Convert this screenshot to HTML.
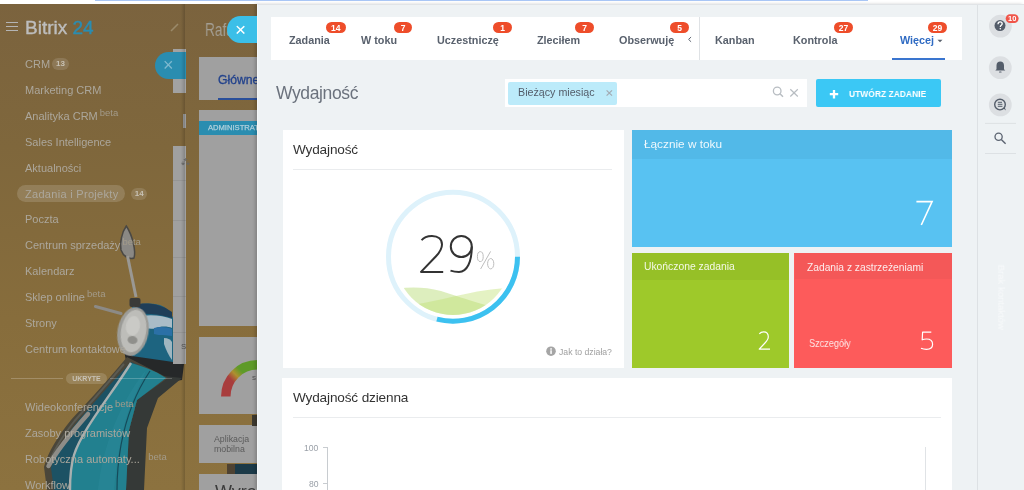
<!DOCTYPE html>
<html><head><meta charset="utf-8">
<style>
*{box-sizing:border-box;margin:0;padding:0}
html,body{width:1024px;height:490px;overflow:hidden}
body *{will-change:transform}
body{position:relative;background:#80683d;font-family:"Liberation Sans",sans-serif}
.a{position:absolute}
.t{position:absolute;white-space:nowrap;line-height:1}
.menu .t{color:#aca79c;font-size:11px}
.beta{font-size:9.5px;color:#a39b8a;position:relative;top:-3.8px;margin-left:2px}
.badge{position:absolute;background:#ee4d2a;color:#fff;font-weight:bold;font-size:8.5px;height:11.2px;border-radius:6px;text-align:center;line-height:13px}
.tab{position:absolute;top:35px;color:#59616d;font-weight:bold;font-size:10.8px;line-height:1;white-space:nowrap}
.card{position:absolute;background:#fff}
.num{position:absolute;color:#fff;font-size:34px;line-height:1}
</style></head><body>

<!-- wallpaper & scooter -->
<svg class="a" style="left:0;top:0" width="257" height="490" viewBox="0 0 257 490">
  <defs><linearGradient id="wp" x1="0" y1="0" x2="0" y2="1"><stop offset="0" stop-color="#7b633e"/><stop offset=".3" stop-color="#7f673c"/><stop offset=".65" stop-color="#876d3c"/><stop offset="1" stop-color="#8c723f"/></linearGradient></defs>
  <rect x="0" y="0" width="257" height="490" fill="url(#wp)"/>
  <!-- mirror -->
  <path d="M126.3 226 C 122 232, 119.5 243, 121 250 C 123 256, 129 260, 134 258 C 136 252, 133 236, 126.3 226 Z" fill="#8a8884" stroke="#4a4844" stroke-width="1.5"/>
  <line x1="127.5" y1="256" x2="136" y2="297" stroke="#9a9894" stroke-width="3"/>
  <!-- handlebar -->
  <line x1="95.5" y1="306.5" x2="121" y2="313.5" stroke="#8c8a86" stroke-width="3" stroke-linecap="round"/>
  <!-- black shadow -->
  <path d="M124 350 L172 350 L184 364 L182 380 L168 382 L148 376 L128 372 Z" fill="#262829"/>
  <!-- blue body -->
  <path d="M132 306 C 140 303, 150 303, 160 305 C 166 307, 171 312, 173 318 L173 362 C 160 360, 145 358, 132 356 Z" fill="#1d6480"/>
  <path d="M134 305 C 145 302, 160 303, 172 312 L172 318 C 160 314, 148 313, 136 314 Z" fill="#1f3e58"/>
  <path d="M142 316 C 152 314, 164 316, 172 319 L172 328 C 168 326, 160 326, 156 328 C 150 330, 146 328, 142 326 Z" fill="#a9bcc7"/>
  <path d="M154 328 C 160 326, 168 327, 172 329 L172 336 C 166 335, 160 336, 154 334 Z" fill="#2b70a6"/>
  <path d="M164 338 C 168 338, 171 340, 172 342 L172 360 C 169 356, 166 350, 164 344 Z" fill="#9fb6c0"/>
  <!-- collar -->
  <rect x="129.5" y="298" width="11" height="9" rx="2" fill="#3a3a38"/>
  <!-- headlight -->
  <g transform="rotate(10 133 331.5)">
    <ellipse cx="133" cy="331.5" rx="15.5" ry="24.5" fill="#9c9c98"/>
    <ellipse cx="133.5" cy="331" rx="12.5" ry="21.5" fill="#bdbdb9"/>
    <ellipse cx="132" cy="326" rx="7" ry="10" fill="#cacac6"/>
    <ellipse cx="134" cy="340" rx="5" ry="4" fill="#8f8f8b"/>
  </g>
  <!-- dark side strip -->
  <path d="M164 376 L182 378 L158 398 L147 428 L144 490 L124 490 L129 430 L137 400 Z" fill="#353937"/>
  <!-- leg shield -->
  <path d="M127 357 L168 378 L137 400 L129 430 L126 490 L47 490 L44 467 C 48 452, 58 436, 71 420 C 85 405, 110 378, 127 357 Z" fill="#4a463a"/>
  <path d="M131 362 L166 378 L137 400 L129 430 L126 490 L54 490 L51 468 C 55 453, 65 437, 78 421 C 91 406, 113 381, 131 362 Z" fill="#1c5264"/>
  <path d="M124 364 C 107 384, 87 407, 74.5 421 C 62 437, 52 452, 48 466" fill="none" stroke="#5a5a52" stroke-width="2"/>
  <path d="M88 414 C 72 432, 56 452, 48.5 466" fill="none" stroke="#8e8d88" stroke-width="4.5" stroke-linecap="round"/>
  <path d="M131 363 C 150 368, 160 374, 166 378 L137 400 L129 430 L126 490 L70 490 C 70 478, 71 465, 74 455 C 82 430, 110 397, 131 363 Z" fill="#22808f"/>
  <path d="M146 370 C 140 385, 132 400, 126 418 C 120 440, 116 465, 114 490 L98 490 C 102 450, 118 405, 146 370 Z" fill="#2a8898" opacity=".6"/>
  <path d="M150 371 C 136 392, 126 418, 121 445 C 118 462, 117 478, 117 490" fill="none" stroke="#164a5a" stroke-width="1.2"/>
  <path d="M131 363 C 111 395, 82 430, 74 455 C 71 465, 70 478, 70 490" fill="none" stroke="#a8b0b0" stroke-width="2.4"/>
</svg>

<!-- top strip -->
<div class="a" style="left:0;top:0;width:1024px;height:4px;background:#fff"></div>
<div class="a" style="left:95px;top:0;width:773px;height:1px;background:#a9c6f5"></div>

<!-- sidebar -->
<div class="menu">
  <div class="a" style="left:6px;top:22px;width:11.5px;height:1.3px;background:#b4b4b4"></div>
  <div class="a" style="left:6px;top:25.8px;width:11.5px;height:1.3px;background:#b4b4b4"></div>
  <div class="a" style="left:6px;top:29.6px;width:11.5px;height:1.3px;background:#b4b4b4"></div>
  <div class="t" style="left:25px;top:18px;font-size:19px;color:#bdbdbd;-webkit-text-stroke:.4px #bdbdbd">Bitrix <span style="color:#2a8db2;-webkit-text-stroke:.4px #2a8db2">24</span></div>
  <div class="t" style="left:24.5px;top:59px">CRM</div>
  <div class="a" style="left:52.4px;top:58.3px;width:17px;height:12px;border-radius:6px;background:rgba(255,255,255,.13);color:#c8c2b5;font-size:8px;font-weight:bold;text-align:center;line-height:12px">13</div>
  <div class="t" style="left:24.5px;top:85px">Marketing CRM</div>
  <div class="t" style="left:24.5px;top:111px">Analityka CRM<span class="beta">beta</span></div>
  <div class="t" style="left:24.5px;top:137px">Sales Intelligence</div>
  <div class="t" style="left:24.5px;top:163px">Aktualności</div>
  <div class="a" style="left:17px;top:184.7px;width:108.4px;height:17.1px;border-radius:9px;background:rgba(255,255,255,.15)"></div>
  <div class="t" style="left:24.5px;top:189px;letter-spacing:.3px">Zadania i Projekty</div>
  <div class="a" style="left:130.6px;top:188.4px;width:16.4px;height:11.8px;border-radius:6px;background:rgba(255,255,255,.13);color:#c8c2b5;font-size:8px;font-weight:bold;text-align:center;line-height:12px">14</div>
  <div class="t" style="left:24.5px;top:214px">Poczta</div>
  <div class="t" style="left:24.5px;top:240px">Centrum sprzedaży<span class="beta">beta</span></div>
  <div class="t" style="left:24.5px;top:266px">Kalendarz</div>
  <div class="t" style="left:24.5px;top:292px">Sklep online<span class="beta">beta</span></div>
  <div class="t" style="left:24.5px;top:318px">Strony</div>
  <div class="t" style="left:24.5px;top:344px">Centrum kontaktowe</div>
  <div class="a" style="left:11px;top:378px;width:52px;height:1px;background:rgba(255,255,255,.22)"></div>
  <div class="a" style="left:66px;top:373px;width:41px;height:11px;border-radius:6px;background:rgba(255,255,255,.15);color:#c8c2b5;font-size:7px;font-weight:bold;text-align:center;line-height:11px">UKRYTE</div>
  <div class="a" style="left:110px;top:378px;width:62px;height:1px;background:rgba(255,255,255,.22)"></div>
  <div class="t" style="left:24.5px;top:402.4px">Wideokonferencje<span class="beta">beta</span></div>
  <div class="t" style="left:24.5px;top:428px">Zasoby programistów</div>
  <div class="t" style="left:24.5px;top:454px">Robotyczna automaty...<span class="beta" style="margin-left:8.5px;top:-3px">beta</span></div>
  <div class="t" style="left:24.5px;top:479.8px">Workflow</div>
</div>

<!-- layer A -->
<div class="a" style="left:172.8px;top:49px;width:13px;height:44px;background:#a2a2a2"></div>
<div class="a" style="left:183px;top:114px;width:3px;height:14px;background:#9a9a9a"></div>
<div class="a" style="left:172.8px;top:146px;width:13px;height:218px;background:#a0a0a0"></div>
<div class="a" style="left:172.8px;top:180px;width:13px;height:1px;background:#959595"></div>
<div class="a" style="left:172.8px;top:219.5px;width:13px;height:1px;background:#959595"></div>
<div class="a" style="left:172.8px;top:256.5px;width:13px;height:1px;background:#959595"></div>
<div class="a" style="left:172.8px;top:296px;width:13px;height:1px;background:#959595"></div>
<div class="a" style="left:172.8px;top:332px;width:13px;height:1px;background:#959595"></div>
<div class="t" style="left:181px;top:343px;font-size:8px;color:#555">S</div>
<div class="t" style="left:181px;top:158px;font-size:8px;color:#666">⁂</div>
<div class="a" style="left:154.6px;top:52px;width:31px;height:27px;border-radius:13.5px 0 0 13.5px;background:#2a8db0"></div>
<div class="t" style="left:163px;top:56px;font-size:18px;color:#7fb9cf">×</div>
<svg class="a" style="left:168px;top:20px" width="14" height="14" viewBox="0 0 14 14"><line x1="3" y1="11" x2="10" y2="4" stroke="#9a8a6a" stroke-width="1.6"/></svg>

<!-- layer B -->
<div class="a" style="left:181px;top:4px;width:4px;height:486px;background:linear-gradient(to right,rgba(0,0,0,0),rgba(0,0,0,.16))"></div>
<div class="t" style="left:205px;top:20.6px;font-size:18px;color:#a39e93;transform:scaleX(.76);transform-origin:0 0">Rafał</div>
<div class="a" style="left:199px;top:57px;width:58px;height:43px;background:#a0a0a0"></div>
<div class="t" style="left:217.6px;top:74.4px;font-size:12.2px;color:#22428c;-webkit-text-stroke:.3px #22428c">Główne</div>
<div class="a" style="left:217.8px;top:98.2px;width:40px;height:1.8px;background:#2a4f9a"></div>
<div class="a" style="left:199px;top:110px;width:58px;height:216px;background:#a0a0a0"></div>
<div class="a" style="left:199px;top:121px;width:58px;height:14px;background:#2a8db0"></div>
<div class="t" style="left:208px;top:124.2px;font-size:7.6px;color:#b0d0dc;-webkit-text-stroke:.25px #b0d0dc">ADMINISTRATOR</div>
<div class="a" style="left:199px;top:337.3px;width:58px;height:77.4px;background:#a0a0a0"></div>
<svg class="a" style="left:199px;top:337px" width="58" height="78" viewBox="199 337 58 78">
  <defs><linearGradient id="gg" x1="0" y1="1" x2="1" y2="0"><stop offset="0" stop-color="#a83d3d"/><stop offset=".35" stop-color="#a83d3d"/><stop offset=".5" stop-color="#ad9030"/><stop offset=".65" stop-color="#5e9a28"/><stop offset="1" stop-color="#5e9a28"/></linearGradient></defs>
  <path d="M225.8 396.5 A 31.7 31.7 0 0 1 257.5 364.8" fill="none" stroke="url(#gg)" stroke-width="9.5"/>
  <text x="252" y="380" font-family="Liberation Sans" font-size="8" fill="#555">s</text>
</svg>
<div class="a" style="left:199px;top:425.3px;width:58px;height:38.2px;background:#a0a0a0"></div>
<div class="t" style="left:214px;top:434px;font-size:8.8px;color:#5b5b5b;line-height:10.4px">Aplikacja<br>mobilna</div>
<div class="a" style="left:227px;top:463.5px;width:8px;height:10.3px;background:#4e4232"></div>
<div class="a" style="left:235px;top:463.5px;width:22px;height:10.3px;background:#1c3a48"></div>
<div class="a" style="left:252px;top:414.7px;width:5px;height:10.6px;background:#3e3a30"></div>
<div class="a" style="left:199px;top:474px;width:58px;height:16px;background:#a0a0a0"></div>
<div class="t" style="left:215px;top:483.2px;font-size:18px;color:#3c3c3c">Wyrazy</div>

<!-- front panel -->
<div class="a" style="left:257px;top:4px;width:767px;height:486px;background:#eef2f4;border-top:1px solid #e1e4e7;border-left:1px solid #f6f8f9;box-shadow:-2px 0 3px rgba(0,0,0,.18)"></div>

<!-- front close -->
<div class="a" style="left:227px;top:16px;width:30px;height:27px;border-radius:13.5px 0 0 13.5px;background:#3bbfe8"></div>
<div class="t" style="left:235px;top:20px;font-size:19px;color:#fff">×</div>

<!-- tab bar -->
<div class="card" style="left:271px;top:17px;width:691px;height:43px"></div>
<div class="tab" style="left:289.3px">Zadania</div>
<div class="badge" style="left:326px;top:22.3px;width:19.6px">14</div>
<div class="tab" style="left:361px">W toku</div>
<div class="badge" style="left:394px;top:22.3px;width:18px">7</div>
<div class="tab" style="left:436.8px">Uczestniczę</div>
<div class="badge" style="left:493px;top:22.3px;width:19px">1</div>
<div class="tab" style="left:536.6px">Zleciłem</div>
<div class="badge" style="left:575px;top:22.3px;width:19px">7</div>
<div class="tab" style="left:618.7px">Obserwuję</div>
<div class="badge" style="left:670px;top:22.3px;width:19px">5</div>
<svg class="a" style="left:687px;top:36px" width="6" height="8" viewBox="0 0 6 8"><path d="M4.1 1 L1.6 3.4 L4.1 5.8" fill="none" stroke="#5d6571" stroke-width="1"/></svg>
<div class="a" style="left:699px;top:17px;width:1px;height:43px;background:#dfe2e5"></div>
<div class="tab" style="left:715.2px">Kanban</div>
<div class="tab" style="left:793.4px">Kontrola</div>
<div class="badge" style="left:833.6px;top:22.3px;width:19px">27</div>
<div class="tab" style="left:899.7px;color:#2f6bc3">Więcej</div>
<svg class="a" style="left:937px;top:39px" width="6" height="4" viewBox="0 0 6 4"><path d="M0.5 0.8 L5.5 0.8 L3 3.2 Z" fill="#59616d"/></svg>
<div class="badge" style="left:928px;top:22.3px;width:19px">29</div>
<div class="a" style="left:892px;top:58px;width:53px;height:2px;background:#3a75cf"></div>

<!-- title -->
<div class="t" style="left:276px;top:85px;font-size:17.5px;letter-spacing:-0.38px;color:#6b727d">Wydajność</div>

<!-- search -->
<div class="card" style="left:505px;top:79.3px;width:302px;height:27.7px"></div>
<div class="a" style="left:508px;top:81.5px;width:109px;height:22.5px;background:#bcebfa;border-radius:2px"></div>
<div class="t" style="left:518px;top:87.2px;font-size:10.7px;color:#535c69">Bieżący miesiąc</div>
<svg class="a" style="left:605px;top:88px" width="9" height="10" viewBox="0 0 9 10"><path d="M1.6 2.3 L7 7.7 M7 2.3 L1.6 7.7" stroke="#a3aab2" stroke-width="1.2"/></svg>
<svg class="a" style="left:772px;top:86px" width="28" height="13" viewBox="0 0 28 13">
  <circle cx="5.2" cy="5" r="3.8" fill="none" stroke="#b8bdc2" stroke-width="1.3"/>
  <line x1="8" y1="7.8" x2="11" y2="10.8" stroke="#b8bdc2" stroke-width="1.5"/>
  <line x1="18.3" y1="3.2" x2="25.8" y2="10.5" stroke="#b8bdc2" stroke-width="1.2"/>
  <line x1="25.8" y1="3.2" x2="18.3" y2="10.5" stroke="#b8bdc2" stroke-width="1.2"/>
</svg>
<div class="a" style="left:816px;top:79.3px;width:125px;height:27.7px;background:#3bc8f5;border-radius:2px"></div>
<svg class="a" style="left:829px;top:89px" width="10" height="10" viewBox="0 0 10 10"><path d="M5 1 V9.4 M0.8 5.2 H9.2" stroke="#fff" stroke-width="2.3"/></svg>
<div class="t" style="left:848.5px;top:89.2px;font-size:9.8px;font-weight:bold;color:#fff;transform:scaleX(.865);transform-origin:0 0">UTWÓRZ ZADANIE</div>

<!-- card gauge -->
<div class="card" style="left:282.5px;top:130px;width:340.5px;height:238px"></div>
<div class="t" style="left:293px;top:143.2px;font-size:13.6px;letter-spacing:-0.15px;color:#333">Wydajność</div>
<div class="a" style="left:293px;top:169px;width:319px;height:1px;background:#eaecee"></div>
<svg class="a" style="left:383px;top:187px" width="140" height="140" viewBox="0 0 140 140">
  <defs><clipPath id="cp"><circle cx="70" cy="69.7" r="58.3"/></clipPath></defs>
  <circle cx="70" cy="69.7" r="64.5" fill="none" stroke="#def2fb" stroke-width="5"/>
  <g clip-path="url(#cp)">
    <path d="M0 104 C 18 100, 38 98.5, 58 104 C 78 110, 100 119, 140 127 L140 140 L0 140 Z" fill="#b3da6e" fill-opacity=".45"/>
    <path d="M0 122 C 30 119, 55 113, 80 107.5 C 100 103, 115 101, 140 100 L140 140 L0 140 Z" fill="#bfe070" fill-opacity=".42"/>
  </g>
  <path d="M 134.5 69.7 A 64.5 64.5 0 0 1 53.96 132.17" fill="none" stroke="#3cc1f0" stroke-width="5"/>
</svg>

<svg class="a" style="left:546px;top:346px" width="10" height="10" viewBox="0 0 10 10"><circle cx="5" cy="5.2" r="4.8" fill="#a5a5a5"/><rect x="4.3" y="4.3" width="1.5" height="3.6" fill="#fff"/><circle cx="5.05" cy="2.9" r=".85" fill="#fff"/></svg>
<div class="t" style="left:559px;top:348px;font-size:8.67px;color:#a0a0a0">Jak to działa?</div>

<!-- blue -->
<div class="a" style="left:632px;top:130px;width:319.6px;height:117px;background:#58c2f2"></div>
<div class="a" style="left:632px;top:130px;width:319.6px;height:28.6px;background:#52b9e8"></div>
<div class="t" style="left:644.3px;top:139px;font-size:11.8px;color:#eef8fd">Łącznie w toku</div>


<!-- green -->
<div class="a" style="left:632px;top:253px;width:157px;height:115px;background:#9ec92a"></div>
<div class="a" style="left:632px;top:253px;width:157px;height:26.5px;background:#96c027"></div>
<div class="t" style="left:644.3px;top:262px;font-size:10.34px;color:#f4f9e6">Ukończone zadania</div>


<!-- red -->
<div class="a" style="left:794.3px;top:253px;width:157.5px;height:115.3px;background:#fd5b5b"></div>
<div class="a" style="left:794.5px;top:253px;width:157.3px;height:26px;background:#f45858"></div>
<div class="t" style="left:807.2px;top:262.5px;font-size:10.25px;color:#fdecec">Zadania z zastrzeżeniami</div>
<div class="t" style="left:809px;top:337.5px;font-size:11.3px;color:#fde6e6;transform:scaleX(.81);transform-origin:0 0">Szczegóły</div>


<!-- bottom card -->
<div class="card" style="left:282.3px;top:377.8px;width:669.5px;height:120px"></div>
<div class="t" style="left:293.3px;top:391.2px;font-size:13.6px;letter-spacing:-0.15px;color:#333">Wydajność dzienna</div>
<div class="a" style="left:293px;top:417px;width:648px;height:1px;background:#eaecee"></div>
<div class="t" style="left:303.8px;top:444px;font-size:8.6px;color:#9aa0a8">100</div>
<div class="t" style="left:308.7px;top:480px;font-size:8.6px;color:#9aa0a8">80</div>
<div class="a" style="left:322.5px;top:447px;width:4.5px;height:1px;background:#c8ccd0"></div>
<div class="a" style="left:322.5px;top:483px;width:4.5px;height:1px;background:#c8ccd0"></div>
<div class="a" style="left:326.6px;top:447px;width:1px;height:50px;background:#c8ccd0"></div>
<div class="a" style="left:925.3px;top:447px;width:1px;height:50px;background:#e0e3e6"></div>

<!-- right bar -->
<div class="a" style="left:977px;top:5px;width:1px;height:485px;background:#dde1e4"></div>
<svg class="a" style="left:977px;top:0" width="47" height="490" viewBox="977 0 47 490">
  <circle cx="1000.4" cy="26.1" r="11.4" fill="#dcdfe2"/>
  <circle cx="1000" cy="25.6" r="5.5" fill="#535c69"/>
  <path d="M998 24.2 C 998 22.6, 999 21.9, 1000.1 21.9 C 1001.3 21.9, 1002.2 22.7, 1002.2 23.8 C 1002.2 25.2, 1000.3 25.4, 1000.3 26.9" fill="none" stroke="#fff" stroke-width="1.3"/>
  <circle cx="1000.3" cy="28.8" r=".8" fill="#fff"/>
  <circle cx="1000.3" cy="67.7" r="11.4" fill="#dcdfe2"/>
  <path d="M995.3 70.6 L996.5 69.2 L996.5 65.5 C 996.5 63, 998 61.6, 1000.3 61.6 C 1002.6 61.6, 1004 63, 1004 65.5 L1004 69.2 L1005.3 70.6 Z" fill="#535c69"/>
  <rect x="999" y="71.4" width="2.6" height="1.2" rx=".6" fill="#535c69"/>
  <circle cx="1000.3" cy="104.9" r="11.4" fill="#dcdfe2"/>
  <circle cx="1000" cy="104.6" r="5.3" fill="none" stroke="#535c69" stroke-width="1.4"/>
  <path d="M1003.5 108.5 L1006 110.5 L1004.6 107.3 Z" fill="#535c69"/>
  <rect x="997.8" y="101.8" width="4.2" height="1" fill="#535c69"/>
  <rect x="997.8" y="103.8" width="4.6" height="1" fill="#535c69"/>
  <rect x="997.8" y="105.8" width="4.6" height="1" fill="#535c69"/>
  <line x1="985" y1="123.4" x2="1016" y2="123.4" stroke="#dde1e4" stroke-width="1"/>
  <circle cx="998.6" cy="136.7" r="3.6" fill="none" stroke="#5b6370" stroke-width="1.3"/>
  <line x1="1001.3" y1="139.4" x2="1005.6" y2="143.7" stroke="#5b6370" stroke-width="1.4"/>
  <line x1="985" y1="153.5" x2="1016" y2="153.5" stroke="#dde1e4" stroke-width="1"/>
  <rect x="1005.7" y="14.3" width="12.9" height="8.6" rx="4.3" fill="#f0554a"/>
  <text x="1012.15" y="21.3" font-family="Liberation Sans" font-weight="bold" font-size="7.5" fill="#fff" text-anchor="middle">10</text>
  <text transform="translate(998.3 264.7) rotate(90)" font-family="Liberation Sans" font-size="8.8" textLength="65" lengthAdjust="spacingAndGlyphs" fill="#f8fafb">Brak kontaktów</text>
</svg>

<svg class="a" style="left:0;top:0" width="1024" height="490" viewBox="0 0 1024 490">
  <path d="M421.6 240.3 C 424 236.8, 428 235.9, 432 235.9 C 438.3 235.9, 442 239.3, 442 244.5 C 442 249, 440 252, 436 256.3 L 421 271.9 L 443.2 271.9" fill="none" stroke="#333" stroke-width="2" stroke-linejoin="round"/>
  <ellipse cx="461.3" cy="246.5" rx="10.5" ry="10.6" fill="none" stroke="#333" stroke-width="2"/>
  <path d="M471.8 246.5 C 471.8 262, 467 271.9, 459 271.9 C 455.5 271.9, 453 271.4, 450.5 270.6" fill="none" stroke="#333" stroke-width="2"/>
  <ellipse cx="480.3" cy="256.6" rx="2.9" ry="4.95" fill="none" stroke="#bdbdbd" stroke-width="1"/>
  <ellipse cx="490.7" cy="263.7" rx="3.1" ry="5.2" fill="none" stroke="#bdbdbd" stroke-width="1"/>
  <line x1="490.6" y1="251.4" x2="480.6" y2="269" stroke="#bdbdbd" stroke-width="1"/>
  <path d="M916.4 201.6 L932.1 201.6 L921.3 225" fill="none" stroke="#fff" stroke-width="1.6" stroke-linejoin="miter"/>
  <path d="M759.3 333.8 C 760.5 332.3, 762 331.8, 763.6 331.8 C 766.5 331.8, 768.3 333.8, 768.3 336.8 C 768.3 339.3, 767 341, 764.5 343.5 L 759.2 349.1 L 770 349.1" fill="none" stroke="#fff" stroke-width="1.2" stroke-linejoin="round"/>
  <path d="M931.3 332.2 L922.6 332.2 L922.2 339.8 C 923.5 339.2, 925 339, 926.5 339 C 930.3 339, 932.6 341.2, 932.6 344.3 C 932.6 347.8, 930 349.3, 926.5 349.3 C 924.3 349.3, 922.3 348.8, 921 348.2" fill="none" stroke="#fff" stroke-width="1.2" stroke-linejoin="round"/>
</svg>
</body></html>
